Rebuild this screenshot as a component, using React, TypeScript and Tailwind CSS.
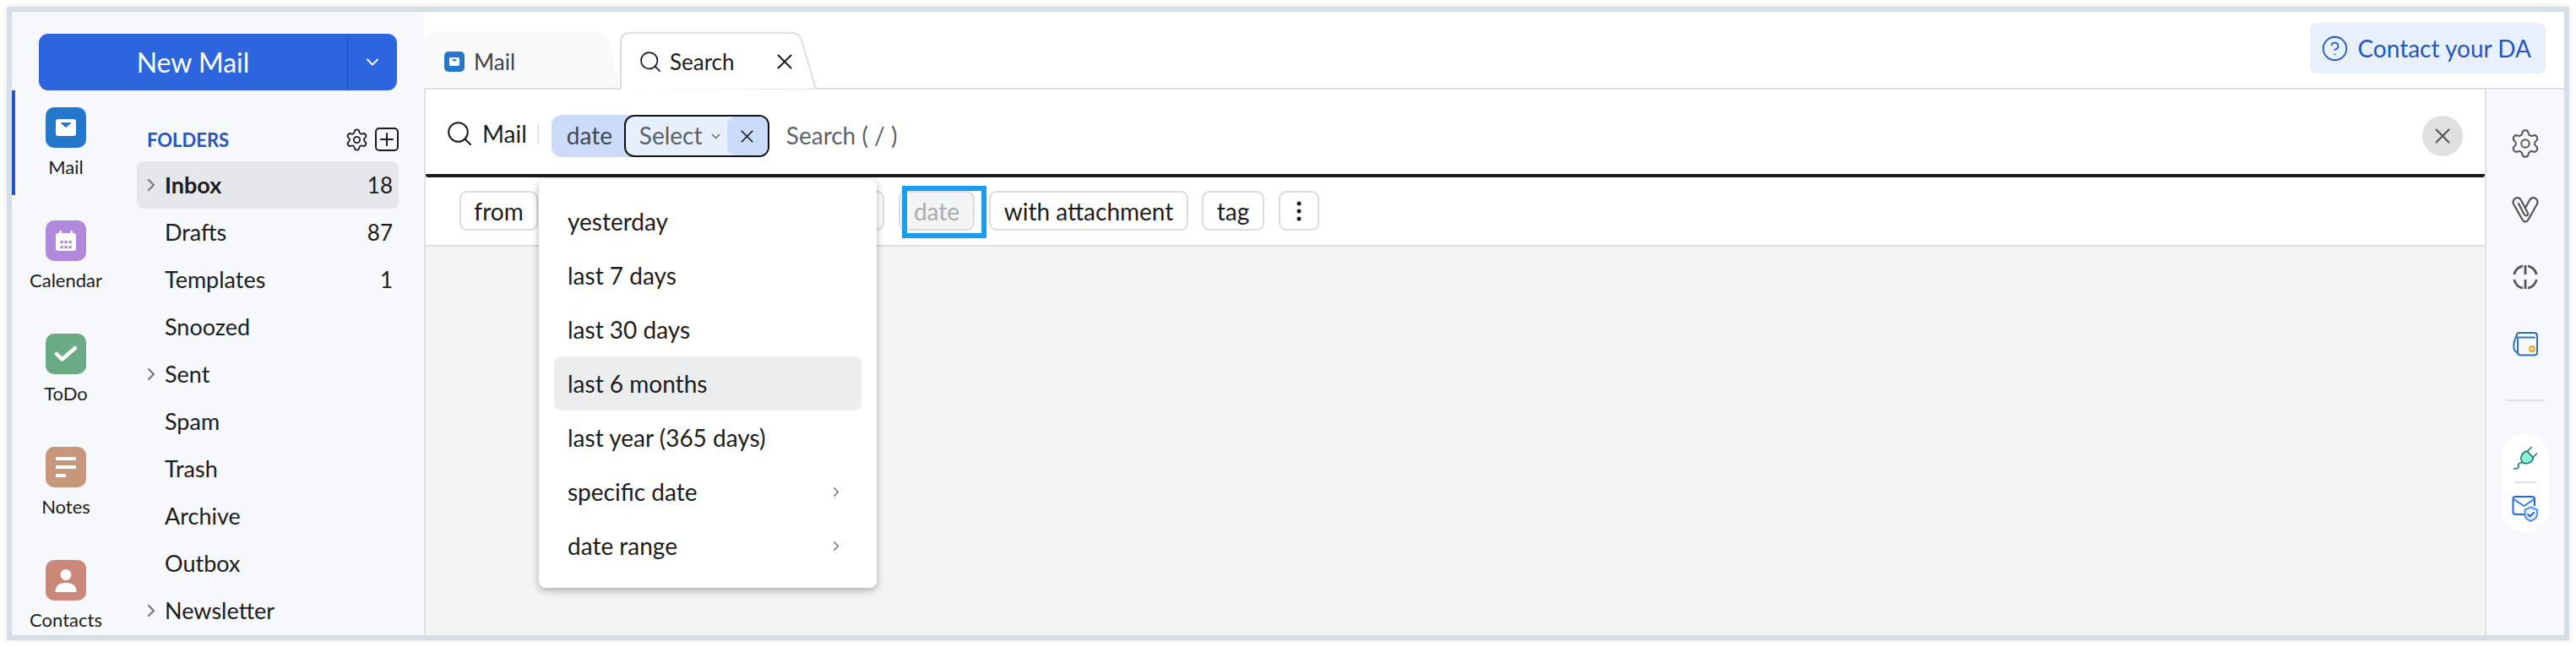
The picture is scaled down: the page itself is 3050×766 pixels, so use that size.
import { Settings, CircleHelp } from "lucide-react";
import type { ReactNode } from "react";

const FOLDERS = [
  { name: "Inbox", count: "18", arrow: true, active: true },
  { name: "Drafts", count: "87" },
  { name: "Templates", count: "1" },
  { name: "Snoozed" },
  { name: "Sent", arrow: true },
  { name: "Spam" },
  { name: "Trash" },
  { name: "Archive" },
  { name: "Outbox" },
  { name: "Newsletter", arrow: true },
];

const DATE_OPTIONS = [
  { label: "yesterday" },
  { label: "last 7 days" },
  { label: "last 30 days" },
  { label: "last 6 months", active: true },
  { label: "last year (365 days)" },
  { label: "specific date", more: true },
  { label: "date range", more: true },
];

function MailGlyph({ size = 48 }: { size?: number }) {
  return (
    <svg width={size} height={size} viewBox="0 0 48 48">
      <rect width="48" height="48" rx="10" fill="#2478cc" />
      <rect x="12" y="14" width="24" height="20" rx="3" fill="#fff" />
      <path d="M18 18.500h12L24 23.500z" fill="#2478cc" stroke="#2478cc" strokeWidth="1" strokeLinejoin="round" />
    </svg>
  );
}

function CalendarGlyph() {
  return (
    <svg width="48" height="48" viewBox="0 0 48 48">
      <rect width="48" height="48" rx="10" fill="#b088dc" />
      <rect x="12" y="15" width="24" height="21" rx="3" fill="#fff" />
      <rect x="16" y="12" width="3" height="6" rx="1.500" fill="#fff" />
      <rect x="29" y="12" width="3" height="6" rx="1.500" fill="#fff" />
      {[17.5, 22.5, 27.5].map((x) =>
        [24, 30].map((y) => <rect key={`${x}-${y}`} x={x} y={y} width="3.200" height="3.200" fill="#b088dc" />)
      )}
    </svg>
  );
}

function TodoGlyph() {
  return (
    <svg width="48" height="48" viewBox="0 0 48 48">
      <rect width="48" height="48" rx="10" fill="#6aab85" />
      <path d="M13 24l6.500 6.500L35 17" fill="none" stroke="#fff" strokeWidth="4.500" strokeLinecap="round" strokeLinejoin="round" />
    </svg>
  );
}

function NotesGlyph() {
  return (
    <svg width="48" height="48" viewBox="0 0 48 48">
      <rect width="48" height="48" rx="10" fill="#c6977b" />
      <rect x="12" y="12" width="24" height="4" fill="#fff" />
      <rect x="12" y="22" width="24" height="4" fill="#fff" />
      <rect x="12" y="32" width="12" height="4" fill="#fff" />
    </svg>
  );
}

function ContactsGlyph() {
  return (
    <svg width="48" height="48" viewBox="0 0 48 48">
      <rect width="48" height="48" rx="10" fill="#c98878" />
      <circle cx="24" cy="17.500" r="6.500" fill="#fff" />
      <path d="M11.500 38Q11.500 27 24 27T36.500 38z" fill="#fff" />
    </svg>
  );
}

const APPS: { label: string; icon: ReactNode; active?: boolean }[] = [
  { label: "Mail", icon: <MailGlyph />, active: true },
  { label: "Calendar", icon: <CalendarGlyph /> },
  { label: "ToDo", icon: <TodoGlyph /> },
  { label: "Notes", icon: <NotesGlyph /> },
  { label: "Contacts", icon: <ContactsGlyph /> },
];

function Lens({ size = 28 }: { size?: number }) {
  return (
    <svg width={size} height={size} viewBox="0 0 28 28" fill="none" stroke="#1a1a1a" strokeWidth="2">
      <circle cx="12.500" cy="12.500" r="11.300" />
      <path d="M20.500 20.500L27 27" strokeLinecap="round" />
    </svg>
  );
}

function Cross({ size = 18, color = "#1a1a1a", width = 2 }: { size?: number; color?: string; width?: number }) {
  return (
    <svg width={size} height={size} viewBox="0 0 18 18" fill="none" stroke={color} strokeWidth={width} strokeLinecap="round">
      <path d="M1.500 1.500l15 15M16.500 1.500l-15 15" />
    </svg>
  );
}

function ChevronRight({ className, color = "#7c7c7c", width = 2.4 }: { className?: string; color?: string; width?: number }) {
  return (
    <svg className={className} viewBox="0 0 10 16" fill="none" stroke={color} strokeWidth={width} strokeLinecap="round" strokeLinejoin="round">
      <path d="M2 2l6 6-6 6" />
    </svg>
  );
}

function Chip({ className, children }: { className: string; children?: ReactNode }) {
  return (
    <div className={`flex h-[47px] shrink-0 items-center justify-center rounded-[9px] border-2 border-[#dcdcdc] ${className}`}>
      {children}
    </div>
  );
}

function RightIcons() {
  return (
    <div className="flex w-[94px] shrink-0 flex-col items-center border-l-2 border-[#e0e2e6] bg-[#f6f8fb]">
      <Settings size={38} strokeWidth={1.25} color="#555555" className="mt-[45px]" />
      <svg width="32" height="32" viewBox="0 0 32 32" fill="none" stroke="#555555" strokeWidth="2.200" strokeLinejoin="round" className="mt-[43px]">
        <path d="M16 30.500Q13.800 30.500 12.500 28L2.300 10Q0 5.500 4 2.800Q8.500 1 11 5L18.600 19.500Q20 22 18 23Q16 24 14.500 21.500L8 9" strokeLinecap="round" />
        <path d="M16 30.500Q18.200 30.500 19.500 28L29.700 10Q32 5.500 28 2.800Q23.500 1 21 5L16.500 13" strokeLinecap="round" />
      </svg>
      <svg width="32" height="32" viewBox="0 0 32 32" fill="none" stroke="#555555" strokeWidth="2.800" className="mt-[48px]">
        <path d="M2.800 13A13.500 13.500 0 0 1 13 2.800M19 2.800A13.500 13.500 0 0 1 29.200 13M29.200 19A13.500 13.500 0 0 1 19 29.200M13 29.200A13.500 13.500 0 0 1 2.800 19" />
        <path d="M16 2v11M16 19v11" />
      </svg>
      <svg width="32" height="32" viewBox="0 0 32 32" fill="none" stroke="#2a70c4" strokeWidth="2" className="mt-[47px]" strokeLinecap="round">
        <path d="M5.500 7Q5.500 3 9.500 3H27Q30 3 30 6.500V26Q30 29.500 26.500 29.500H11Q7 29.500 6.500 26" />
        <path d="M7 8.500H27" />
        <path d="M5.500 7Q1.500 14 2.500 21Q3 25.500 7 26.500V10" />
        <circle cx="24" cy="22" r="2.800" stroke="#f5a623" strokeWidth="2.200" />
      </svg>
      <div className="mt-[50px] h-[2px] w-[46px] bg-[#dfe1e8]" />
      <div className="mt-[39px] flex h-[116px] w-[56px] flex-col items-center rounded-[28px] bg-white pt-[13px]">
        <svg width="30" height="30" viewBox="0 0 30 30" fill="none" stroke="#1a7a60" strokeWidth="1.600" strokeLinecap="round" strokeLinejoin="round">
          <path d="M11 11.500Q14 6.500 17.500 7.500L24 14.500Q25 18 20.500 20.500Q15 23 11.500 20.500Q8.500 16 11 11.500z" fill="#8ef0d8" />
          <path d="M17.500 7.500L22 2.500M24 14.500L28.500 10M10.500 20.500Q6 21.500 7 24.500Q7.500 28 1.500 28" />
        </svg>
        <div className="mt-[13px] h-[2px] w-[26px] bg-[#dfe1e8]" />
        <svg width="32" height="32" viewBox="0 0 32 32" fill="none" className="mt-[14px]" strokeLinejoin="round">
          <path d="M18 23H4.500Q1.500 23 1.500 20V5Q1.500 2 4.500 2H24Q27 2 27 5V13" stroke="#2166e6" strokeWidth="2" />
          <path d="M2 5L14.500 13L26.500 5" stroke="#2f7bf0" strokeWidth="2" />
          <path d="M21 15L15.500 17.500V23Q15.500 28 22 31Q30 28 30 23V17.500L25 15.500Q23 14 21 15z" fill="#e8f1fe" stroke="#4a90f5" strokeWidth="2" />
          <path d="M19 23l2.500 2.500L26 21" stroke="#2166e6" strokeWidth="2" strokeLinecap="round" />
        </svg>
      </div>
    </div>
  );
}

export default function App() {
  return (
    <div className="h-[766px] w-[3050px] overflow-hidden bg-white p-2 font-['Lato',sans-serif] text-[28px] text-[#1c1c1c]">
      <div className="flex h-[750px] overflow-hidden border-[6px] border-[#d5dee5] shadow-[0_0_8px_rgba(0,0,0,0.1)]">
        {/* left rail */}
        <aside className="w-[488px] shrink-0 bg-[#f6f8fb]">
          <div className="mx-[32px] mt-[26px] flex h-[67px] w-[424px] rounded-[11px] bg-[#2c65dd] text-white">
            <div className="flex flex-1 items-center justify-center text-[32px] leading-none">New Mail</div>
            <div className="flex w-[59px] items-center justify-center border-l border-[#2450ab]">
              <svg width="14" height="9" viewBox="0 0 14 9" fill="none" stroke="#fff" strokeWidth="1.800" strokeLinecap="round" strokeLinejoin="round">
                <path d="M1 1.500l6 6 6-6" />
              </svg>
            </div>
          </div>
          <div className="flex">
            <nav className="w-[128px] shrink-0">
              {APPS.map((app) => (
                <div
                  key={app.label}
                  className={`mb-[10px] flex h-[124px] flex-col items-center border-l-4 pt-[20px] pr-[4px] ${
                    app.active ? "border-[#2456c0]" : "border-transparent"
                  }`}
                >
                  {app.icon}
                  <span className="mt-[9px] text-[22px] leading-[28px]">{app.label}</span>
                </div>
              ))}
            </nav>
            <div className="ml-[20px] w-[310px] text-[27px]">
              <div className="mt-[44px] mb-[12px] flex h-[28px] items-center">
                <span className="ml-[12px] text-[22px] font-bold text-[#2456c0]">FOLDERS</span>
                <Settings size={29} strokeWidth={1.5} color="#1c1c1c" className="ml-auto" />
                <div className="ml-[7px] flex h-[28px] w-[28px] items-center justify-center rounded-[5px] border-2 border-[#1c1c1c]">
                  <svg width="16" height="16" viewBox="0 0 16 16" stroke="#1c1c1c" strokeWidth="2" strokeLinecap="round">
                    <path d="M8 1v14M1 8h14" />
                  </svg>
                </div>
              </div>
              {FOLDERS.map((f) => (
                <div
                  key={f.name}
                  className={`flex h-[56px] items-center rounded-[8px] pr-[7px] ${f.active ? "bg-[#e6e7ea]" : ""}`}
                >
                  <div className="ml-[12px] w-[21px]">
                    {f.arrow && <ChevronRight className="h-[16px] w-[10px]" />}
                  </div>
                  <span className={`flex-1 ${f.active ? "font-bold" : ""}`}>{f.name}</span>
                  {f.count && <span className="text-[26px]">{f.count}</span>}
                </div>
              ))}
            </div>
          </div>
        </aside>

        <div className="flex min-w-0 flex-1 flex-col">
          {/* tabs */}
          <header className="flex h-[92px] shrink-0 border-b-2 border-[#dedede]">
            <div className="flex pt-[24px] text-[26px]">
              <div className="relative flex h-[66px] w-[232px] items-center pt-[4px] pl-[24px] text-[#444]">
                <svg className="absolute top-0 left-0" width="232" height="66" viewBox="0 0 232 66">
                  <path d="M0 66V12Q0 0 12 0H205Q216 0 219 10L232 66z" fill="#f9f9f9" />
                </svg>
                <span className="relative flex items-center gap-[11px]">
                  <MailGlyph size={24} />
                  Mail
                </span>
              </div>
              <div className="relative -mb-[2px] flex h-[68px] w-[233px] items-center pt-[2px] pl-[24px]">
                <svg className="absolute top-0 left-0" width="233" height="68" viewBox="0 0 233 68">
                  <path d="M1 68V12Q1 1 12 1H204Q212 1 215 10L232 67" fill="#fff" stroke="#dedede" strokeWidth="2" />
                </svg>
                <span className="relative flex items-center">
                  <Lens size={24} />
                  <span className="ml-[11px] w-[127px]">Search</span>
                  <Cross />
                </span>
              </div>
            </div>
            <div className="mt-[13px] mr-[22px] ml-auto flex h-[60px] items-center gap-[10px] rounded-[8px] bg-[#e8f0fd] pr-[17px] pl-[13px] text-[#2456c0]">
              <CircleHelp size={33} strokeWidth={1.3} />
              <span>Contact your DA</span>
            </div>
          </header>

          <div className="flex min-h-0 flex-1">
            <main className="relative flex min-w-0 flex-1 flex-col border-l-2 border-[#dedede]">
              {/* search bar */}
              <div className="flex h-[104px] shrink-0 items-center rounded-b-[3px] border-b-4 border-[#1a1a1a] pt-[10px] pr-[26px] pl-[26px]">
                <span className="-mt-[6px] flex items-center">
                  <Lens />
                  <span className="ml-[13px]">Mail</span>
                  <span className="ml-[12px] h-[23px] w-[2px] bg-[#e2e2e2]" />
                </span>
                <div className="ml-[15px] flex h-[50px] items-center rounded-[12px] bg-[#cbdcfb] pl-[18px] text-[#44474f]">
                  <span className="w-[68px] pb-[2px]">date</span>
                  <div className="flex h-[50px] w-[172px] items-center overflow-hidden rounded-[12px] border-2 border-[#111] bg-[#e7effd]">
                    <span className="ml-[16px] pb-[2px] text-[#5c6068]">Select</span>
                    <svg width="11" height="7" viewBox="0 0 11 7" fill="none" stroke="#666" strokeWidth="1.500" className="ml-[10px]">
                      <path d="M1 1l4.500 4.500L10 1" />
                    </svg>
                    <div className="ml-auto flex h-full w-[48px] items-center justify-center rounded-l-[10px] bg-[#cbdcfb]">
                      <Cross size={15} />
                    </div>
                  </div>
                </div>
                <span className="ml-[20px] pb-[2px] text-[#5f6269]">Search ( / )</span>
                <div className="ml-auto flex h-[48px] w-[48px] items-center justify-center rounded-full bg-[#e0e0e0]">
                  <Cross size={18} color="#555" />
                </div>
              </div>

              {/* filter chips */}
              <div className="flex h-[82px] shrink-0 gap-[17px] border-b-2 border-[#dedede] pt-[16px] pl-[40px]">
                <Chip className="w-[93px]">from</Chip>
                <Chip className="w-[393px]" />
                <Chip className="w-[90px] bg-[#f3f4f5] text-[#aaabb0]">date</Chip>
                <Chip className="w-[236px]">with attachment</Chip>
                <Chip className="-ml-[1px] w-[74px]">tag</Chip>
                <Chip className="w-[48px]">
                  <svg width="6" height="24" viewBox="0 0 6 24" fill="#1c1c1c">
                    <circle cx="3" cy="3" r="2.500" />
                    <circle cx="3" cy="12" r="2.500" />
                    <circle cx="3" cy="21" r="2.500" />
                  </svg>
                </Chip>
              </div>

              <div className="flex-1 bg-[#f3f5f5]" />

              {/* focus ring on the date chip */}
              <div className="absolute top-[114px] left-[564px] h-[62px] w-[100px] border-[6px] border-[#1a9cf0]" />

              {/* date dropdown */}
              <div className="absolute top-[106px] left-[134px] w-[400px] rounded-[8px] bg-white px-[18px] pt-[18px] pb-[18px] shadow-[0_3px_10px_rgba(0,0,0,0.3)]">
                {DATE_OPTIONS.map((o) => (
                  <div
                    key={o.label}
                    className={`flex h-[64px] items-center justify-between rounded-[8px] pr-[26px] pl-[16px] ${
                      o.active ? "bg-[#ecedef]" : ""
                    }`}
                  >
                    <span>{o.label}</span>
                    {o.more && <ChevronRight className="h-[13px] w-[8px]" color="#666" width={1.6} />}
                  </div>
                ))}
              </div>
            </main>
            <RightIcons />
          </div>
        </div>
      </div>
    </div>
  );
}
